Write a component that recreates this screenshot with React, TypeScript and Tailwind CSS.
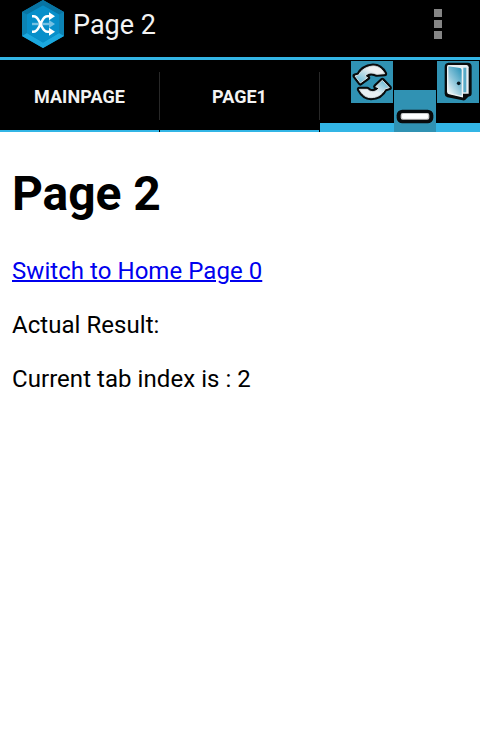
import React from "react";

function AppLogo() {
  return (
    <svg className="block h-12 w-[42px]" viewBox="0 0 42 48">
      <path d="M21 0 42 12V36L21 48 0 36V12Z" fill="#0787b9" />
      <path d="M21 0 42 12V36L37 33V14.5L21 5.5 5 14.5V33L0 36V12Z" fill="#0874a3" />
      <path d="M0 12 5 14.5V33L0 36ZM42 12 37 14.5V33L42 36Z" fill="#0c83b4" />
      <path d="M0 36 5 33 21 42.5 37 33 42 36 21 48Z" fill="#1ba8df" />
      <path d="M21 5.5 37 14.5V33L21 42.5 5 33V14.5Z" fill="#078fca" />
      <path d="M10 24H29" stroke="#75c1e3" strokeWidth="2.4" />
      <path d="M27 20 33 24 27 28Z" fill="#75c1e3" />
      <path d="M10 16.3H11.5C14.5 16.3 15.5 18 17 21L20 27C21.5 30 22.5 31.8 25.5 31.8H30M10 31.8H11.5C14.5 31.8 15.5 30 17 27L20 21C21.5 18 22.5 16.3 25.5 16.3H30" fill="none" stroke="#fff" strokeWidth="2.5" />
      <path d="M27 12.3 33 16.3 27 20.3ZM27 27.8 33 31.8 27 35.8Z" fill="#fff" />
    </svg>
  );
}

function RefreshIcon() {
  return (
    <svg className="block size-[42px]" viewBox="0 0 126 126">
      <defs>
        <linearGradient id="arrowTop" x1="1" y1="0" x2="0" y2="1">
          <stop offset="0.35" stopColor="#eef1f2" />
          <stop offset="1" stopColor="#55b3d3" />
        </linearGradient>
        <linearGradient id="arrowBottom" x1="0" y1="1" x2="1" y2="0">
          <stop offset="0.45" stopColor="#e8eff2" />
          <stop offset="1" stopColor="#4fb0d0" />
        </linearGradient>
      </defs>
      <g stroke="#080b0c" strokeWidth="15" strokeLinejoin="round">
        <path d="M101 38C92 21 80 15 66 15C46 17 30 27 23 42L12 45 28 66 50 50 42 45C51 36 60 34 71 38L77 40Z" />
        <path d="M25 85C34 102 45 110 60 110C79 110 94 101 102 84L115 80 94 58 74 77 84 81C77 91 67 94 56 90L49 85Z" />
      </g>
      <g stroke="#dce3e6" strokeWidth="3" strokeLinejoin="round">
        <path fill="url(#arrowTop)" d="M101 38C92 21 80 15 66 15C46 17 30 27 23 42L12 45 28 66 50 50 42 45C51 36 60 34 71 38L77 40Z" />
        <path fill="url(#arrowBottom)" d="M25 85C34 102 45 110 60 110C79 110 94 101 102 84L115 80 94 58 74 77 84 81C77 91 67 94 56 90L49 85Z" />
      </g>
    </svg>
  );
}

function MinimizeIcon() {
  return (
    <svg className="block size-[42px]" viewBox="0 0 126 126">
      <rect x="8" y="59" width="110" height="41" rx="17" fill="#080a0b" />
      <rect x="20" y="69" width="86" height="20" rx="6" fill="#ccc" />
      <rect x="24" y="72" width="78" height="14" rx="4" fill="#fff" />
    </svg>
  );
}

function DoorIcon() {
  return (
    <svg className="block size-[42px]" viewBox="0 0 126 126">
      <defs>
        <linearGradient id="door" x1="0.9" y1="0" x2="0.2" y2="1">
          <stop stopColor="#228fb6" />
          <stop offset="0.55" stopColor="#8cc5da" />
          <stop offset="1" stopColor="#f2f8fa" />
        </linearGradient>
      </defs>
      <path d="M34 5H92Q104 5 104 17V97Q104 107 94 107L88 113Q84 120 77 118L31 109Q23 106 23 98V17Q23 7 34 5Z" fill="#080b0c" />
      <path d="M35 12H89Q95 13 95 19V98H34V15Z" fill="#e7eff2" />
      <path d="M79 20H88V94H79Z" fill="#58aac7" />
      <path d="M34 14 70 19Q76 20 76 28V107L37 98Q32 97 32 92V18Q32 14 34 14Z" fill="url(#door)" stroke="#edf2f4" strokeWidth="4" />
      <circle cx="65" cy="67" r="5.5" fill="#081820" />
    </svg>
  );
}

export default function App() {
  return (
    <div className="h-[750px] w-[480px] overflow-hidden bg-white font-['Roboto',sans-serif] text-black">
      <header className="flex h-[60px] items-start border-b-[3px] border-[#33b5e5] bg-black pl-[22px] pr-[38px]">
        <AppLogo />
        <h2 className="ml-[9px] mt-[4px] grow text-[27px] leading-[42px] text-[#f3f3f3]">Page 2</h2>
        <div className="mt-[9px] flex flex-col gap-[3px]">
          <i className="size-2 bg-[#858585]" />
          <i className="size-2 bg-[#858585]" />
          <i className="size-2 bg-[#858585]" />
        </div>
      </header>
      <nav className="relative flex h-[72px] bg-black text-[18px] font-bold text-[#f3f3f3]">
        <div className="flex w-40">
          <div className="flex w-[159px] items-center justify-center border-b-2 border-[#33b5e5] pt-[3px] tracking-[0.08px]">MAINPAGE</div>
          <div className="mt-3 h-12 w-px bg-[#282828]" />
        </div>
        <div className="flex w-40">
          <div className="flex w-[159px] items-center justify-center border-b-2 border-[#33b5e5] pt-[3px]">PAGE1</div>
          <div className="mt-3 h-12 w-px bg-[#282828]" />
        </div>
        <div className="w-40 border-b-[9px] border-[#33b5e5]" />
        <div className="absolute right-px top-px flex gap-px">
          <div className="size-[42px] bg-[#3092b3]"><RefreshIcon /></div>
          <div className="mt-[29px] size-[42px] bg-[#3092b3]"><MinimizeIcon /></div>
          <div className="size-[42px] bg-[#3092b3]"><DoorIcon /></div>
        </div>
      </nav>
      <main className="px-3 pt-[34px] text-[24px] leading-[28px] tracking-[0.05px]">
        <h1 className="text-[48px] font-bold leading-[56px] tracking-[-0.1px]">Page 2</h1>
        <p className="mt-[35px]"><a href="#" className="text-[#0000ee] underline decoration-[1.5px]">Switch to Home Page 0</a></p>
        <p className="mt-[26px]">Actual Result:</p>
        <p className="mt-[26px]">Current tab index is : 2</p>
      </main>
    </div>
  );
}
